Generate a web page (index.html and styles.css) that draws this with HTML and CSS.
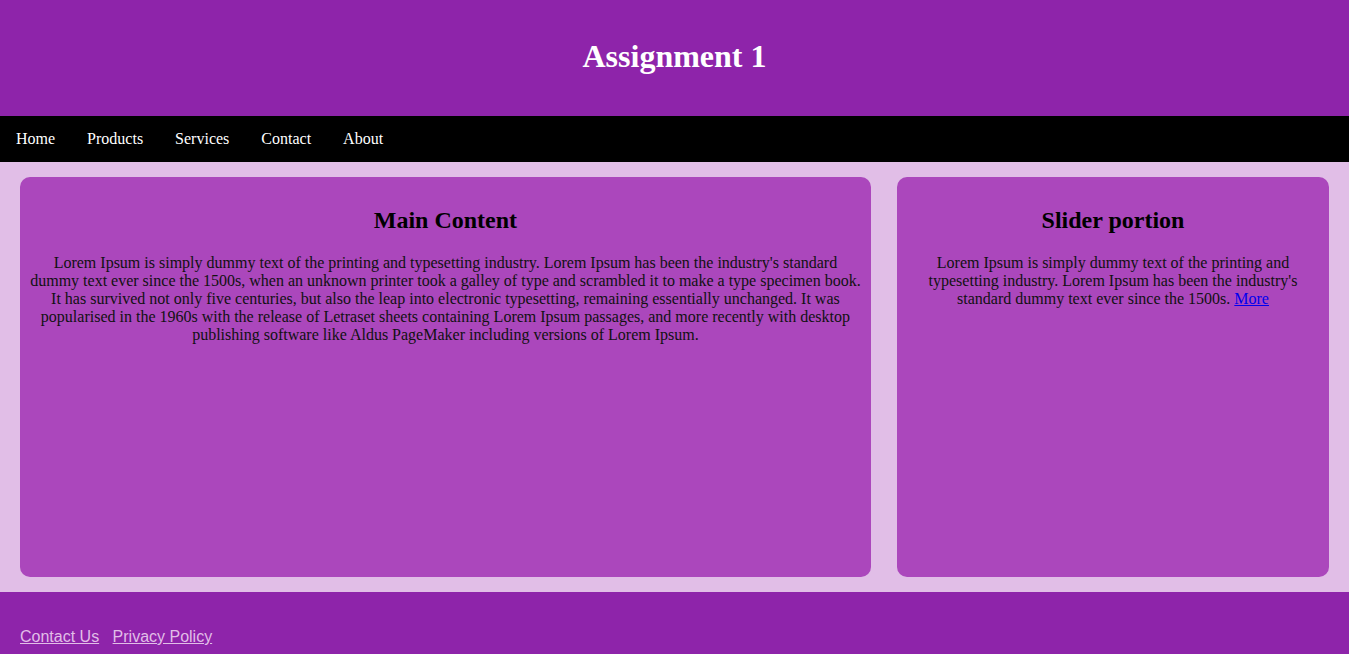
FILE: index.html
```html
<!DOCTYPE html>
<html>
<head>
<meta charset="utf-8">
<title>Assignment 1</title>
<link rel="stylesheet" href="styles.css">
</head>
<body>
<header class="site-header">
  <h1 class="site-title">Assignment 1</h1>
</header>
<nav class="site-nav">
  <a href="#" class="nav-link">Home</a>
  <a href="#" class="nav-link">Products</a>
  <a href="#" class="nav-link">Services</a>
  <a href="#" class="nav-link">Contact</a>
  <a href="#" class="nav-link">About</a>
</nav>
<main class="content">
  <section class="card card-main">
    <h2 class="card-title">Main Content</h2>
    <p class="card-text">Lorem Ipsum is simply dummy text of the printing and typesetting industry. Lorem Ipsum has been the industry's standard dummy text ever since the 1500s, when an unknown printer took a galley of type and scrambled it to make a type specimen book. It has survived not only five centuries, but also the leap into electronic typesetting, remaining essentially unchanged. It was popularised in the 1960s with the release of Letraset sheets containing Lorem Ipsum passages, and more recently with desktop publishing software like Aldus PageMaker including versions of Lorem Ipsum.</p>
  </section>
  <aside class="card card-side">
    <h2 class="card-title">Slider portion</h2>
    <p class="card-text">Lorem Ipsum is simply dummy text of the printing and typesetting industry. Lorem Ipsum has been the industry's standard dummy text ever since the 1500s. <a href="#" class="more-link">More</a></p>
  </aside>
</main>
<footer class="site-footer">
  <p class="footer-links"><a href="#" class="footer-link">Contact Us</a> <a href="#" class="footer-link">Privacy Policy</a></p>
</footer>
</body>
</html>
```
FILE: styles.css
```css
body {
  margin: 0;
  font-family: "Liberation Serif", "Times New Roman", serif;
  font-size: 16px;
}

.site-header {
  background: #8e24aa;
  height: 116px;
  display: flex;
  align-items: center;
  justify-content: center;
}

.site-title {
  margin: 0;
  color: #ffffff;
  font-size: 32px;
  font-weight: bold;
  position: relative;
  top: -2px;
}

.site-nav {
  background: #000000;
  height: 46px;
  display: flex;
  align-items: center;
}

.nav-link {
  color: #ffffff;
  text-decoration: none;
  padding: 0 16px;
}

.content {
  background: #e1bee7;
  padding: 15px 20px;
  display: flex;
  justify-content: space-between;
}

.card {
  background: #ab47bc;
  border-radius: 10px;
  height: 400px;
  box-sizing: border-box;
  padding: 10px;
  text-align: center;
}

.card-main {
  width: 65%;
}

.card-side {
  width: 33%;
}

.card-title {
  font-size: 24px;
  margin: 20px 0;
}

.card-text {
  margin: 0;
  color: #111111;
}

.more-link {
  color: #0000ee;
}

.site-footer {
  background: #8e24aa;
  padding: 20px;
  height: 80px;
}

.footer-links {
  margin: 16px 0;
  font-family: "Liberation Sans", Arial, sans-serif;
}

.footer-link {
  color: #e1bee7;
  margin-right: 9px;
}
```
